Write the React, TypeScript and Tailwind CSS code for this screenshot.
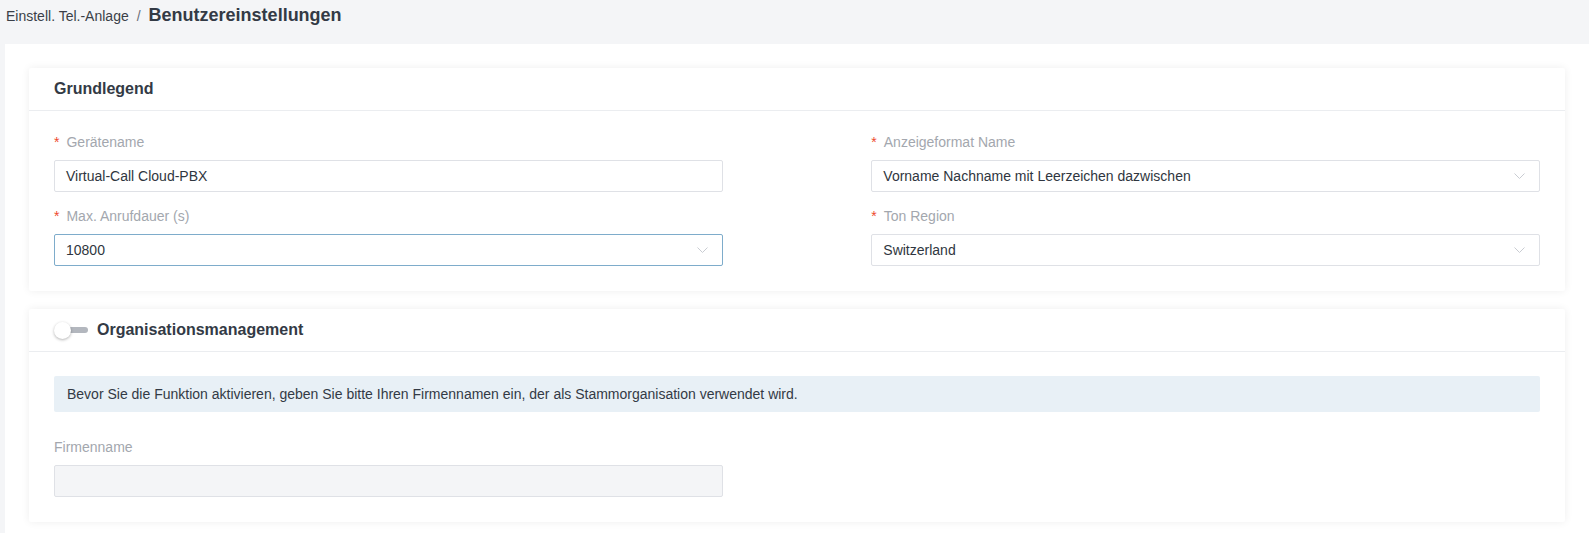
import React from 'react';

const font = { fontFamily: '"Liberation Sans", Arial, sans-serif' };

function Chevron() {
  return (
    <svg width="11" height="6" viewBox="0 0 11 6" fill="none" className="shrink-0">
      <path d="M0.5 0.5L5.5 5.5L10.5 0.5" stroke="#c9ccd2" strokeWidth="1" />
    </svg>
  );
}

interface FieldProps {
  label: string;
  value?: string;
  required?: boolean;
  select?: boolean;
  focused?: boolean;
  disabled?: boolean;
}

function Field({ label, value, required, select, focused, disabled }: FieldProps) {
  const border = focused ? 'border-[#7eaccb]' : 'border-[#dfe1e6]';
  const bg = disabled ? 'bg-[#f4f5f7]' : 'bg-white';
  return (
    <div className="w-[45%]">
      <div className="h-5 leading-5 text-[14px] text-[#a3a7ae] flex items-center">
        {required && <span className="text-[#ee4a2e] mr-[7px] text-[14px]">*</span>}
        {label}
      </div>
      <div className={`mt-2 h-8 border ${border} ${bg} rounded-[2px] flex items-center justify-between pl-[11px] pr-[14px]`}>
        <span className="text-[14px] text-[#2f3640]">{value}</span>
        {select && <Chevron />}
      </div>
    </div>
  );
}

function Card({ header, children, bodyClass }: { header: React.ReactNode; children: React.ReactNode; bodyClass: string }) {
  return (
    <div className="bg-white rounded-[2px] shadow-[0_0_8px_rgba(0,0,0,0.07)]">
      <div className="h-[43px] border-b border-[#ebedf0] px-[25px] flex items-center">{header}</div>
      <div className={`px-[25px] ${bodyClass}`}>{children}</div>
    </div>
  );
}

export default function App() {
  return (
    <div className="min-h-screen bg-[#f4f5f7]" style={font}>
      <div className="h-[44px] pt-[5px] pl-[6px] flex items-start">
        <div className="flex items-baseline leading-5">
          <span className="text-[14px] text-[#3a3f47]">Einstell. Tel.-Anlage</span>
          <span className="text-[14px] text-[#6b7079] mx-[8px]">/</span>
          <span className="text-[18px] font-bold text-[#333a45]">Benutzereinstellungen</span>
        </div>
      </div>
      <div className="ml-[5px] bg-white p-6 flex flex-col gap-[18px]">
        <Card
          header={<span className="text-[16px] font-bold text-[#333a45]">Grundlegend</span>}
          bodyClass="pt-[21px] pb-[25px]"
        >
          <div className="flex flex-col gap-[14px]">
            <div className="flex justify-between">
              <Field label="Gerätename" value="Virtual-Call Cloud-PBX" required />
              <Field label="Anzeigeformat Name" value="Vorname Nachname mit Leerzeichen dazwischen" required select />
            </div>
            <div className="flex justify-between">
              <Field label="Max. Anrufdauer (s)" value="10800" required select focused />
              <Field label="Ton Region" value="Switzerland" required select />
            </div>
          </div>
        </Card>
        <Card
          header={
            <div className="flex items-center">
              <div className="relative w-[34px] h-[18px] mr-[9px] flex items-center">
                <div className="absolute left-[4px] right-0 h-[6px] rounded-full bg-[#b3b7be]" />
                <div className="absolute left-0 top-[1px] w-[17px] h-[17px] rounded-full bg-white shadow-[0_1px_3px_rgba(0,0,0,0.3)]" />
              </div>
              <span className="text-[16px] font-bold text-[#333a45]">Organisationsmanagement</span>
            </div>
          }
          bodyClass="pt-[24px] pb-[25px]"
        >
          <div className="h-9 bg-[#e8f0f6] rounded-[2px] flex items-center pl-[13px] text-[14px] text-[#333a45]">
            Bevor Sie die Funktion aktivieren, geben Sie bitte Ihren Firmennamen ein, der als Stammorganisation verwendet wird.
          </div>
          <div className="mt-[25px]">
            <Field label="Firmenname" disabled />
          </div>
        </Card>
      </div>
    </div>
  );
}
